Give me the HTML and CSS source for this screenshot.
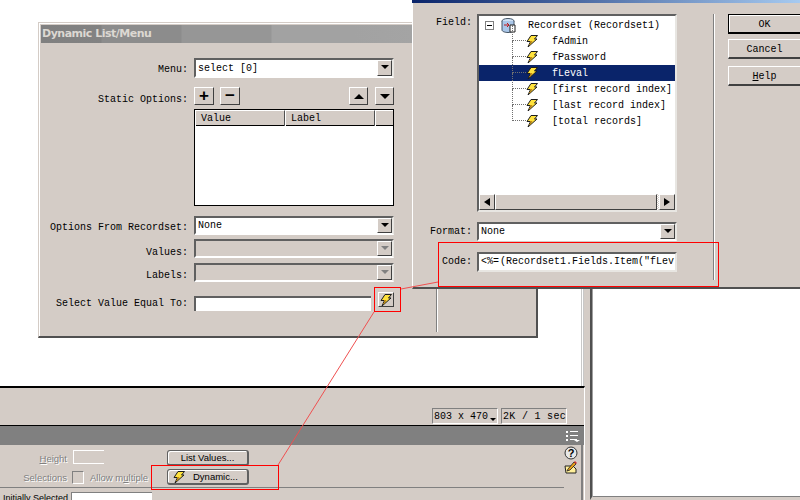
FILE: index.html
```html
<!DOCTYPE html>
<html lang="en">
<head>
<meta charset="utf-8">
<title>Dynamic List/Menu</title>
<link rel="stylesheet" href="styles.css">
</head>
<body>
<div class="desk">

  <div class="gutter"></div>
  <div class="docpane"></div>

  <section class="workspace">
    <div class="status">
      <span class="status-box size">803 x 470<i class="caret"></i></span>
      <span class="status-box speed">2K / 1 sec</span>
    </div>
    <div class="band">
      <svg class="band-icon" width="14" height="12" viewBox="0 0 14 12"><path d="M0 1h2v2H0zM0 5h2v2H0zM0 9h2v2H0zM4 1h8v1H4zM4 5h8v1H4zM4 9h7v1H4zM8 10h6l-3 2z" fill="#fff"/></svg>
    </div>
    <div class="props">
      <div class="prop-main">
        <div class="prop-row first">
          <span class="prop-label"><u>H</u>eight</span>
          <span class="prop-mid"><span class="prop-input"></span></span>
          <button class="cast">List Values...</button>
        </div>
        <div class="prop-row second">
          <span class="prop-label">Selections</span>
          <span class="prop-mid">
            <span class="prop-check"></span>
            <span class="prop-label multi">Allow m<u>u</u>ltiple</span>
          </span>
          <button class="cast dyn">
            <svg class="bolt" viewBox="0 0 12 12"><use href="#bolt"/></svg>
            <span>Dynamic...</span>
          </button>
        </div>
        <div class="prop-third">
          <span class="init-label">Initially Selected</span>
          <span class="init-input"></span>
        </div>
      </div>
      <div class="prop-side">
        <svg width="14" height="14" viewBox="0 0 14 14"><circle cx="7" cy="7" r="6" fill="#e8e8e8" stroke="#333"/><text x="7" y="10.500" class="q">?</text></svg>
        <svg width="14" height="14" viewBox="0 0 14 14"><path d="M1 6h8l3 3v4H2z" fill="#ffef9a" stroke="#222"/><path d="M4 9l6-7 2 2-6 6-3 1z" fill="#e8a018" stroke="#222" stroke-width=".8"/><path d="M10 2l1-1 2 2-1 1z" fill="#d03030"/></svg>
      </div>
    </div>
  </section>

  <section class="win win-list">
    <h1 class="title">Dynamic List/Menu</h1>
    <div class="win-sep"></div>
    <div class="form">
      <label class="lbl r-menu">Menu:</label>
      <div class="select r-menu"><span>select [0]</span><i class="drop"></i></div>

      <label class="lbl r-tools">Static Options:</label>
      <div class="tools r-tools">
        <button class="tool"><b>+</b></button>
        <button class="tool"><b>−</b></button>
        <span class="grow"></span>
        <button class="tool arrow"><i class="tri up"></i></button>
        <button class="tool arrow"><i class="tri down"></i></button>
      </div>

      <div class="table r-table">
        <div class="thead">
          <span class="th val">Value</span>
          <span class="th lab">Label</span>
          <span class="th end"></span>
        </div>
      </div>

      <label class="lbl r-opts">Options From Recordset:</label>
      <div class="select r-opts"><span>None</span><i class="drop"></i></div>

      <label class="lbl r-vals">Values:</label>
      <div class="select off r-vals"><span></span><i class="drop"></i></div>

      <label class="lbl r-labs">Labels:</label>
      <div class="select off r-labs"><span></span><i class="drop"></i></div>

      <label class="lbl r-eq">Select Value Equal To:</label>
      <div class="eq r-eq">
        <div class="text-in"></div>
        <button class="bolt-btn"><svg class="bolt" viewBox="0 0 12 12"><use href="#bolt"/></svg></button>
      </div>
    </div>
  </section>

  <section class="win win-field">
    <div class="field-top"></div>
    <div class="field-body">
      <div class="field-form">
        <label class="lbl2 field-lbl">Field:</label>
        <div class="tree">
          <div class="tree-scroll">
            <div class="node root">
              <i class="minus"></i>
              <svg class="db" width="15" height="15" viewBox="0 0 15 15"><ellipse cx="7" cy="3" rx="6" ry="2.500" fill="#cfe0f4" stroke="#456"/><path d="M1 3v9c0 1.500 3 2.500 6 2.500s6-1 6-2.500V3" fill="#a9c6e8" stroke="#456"/><path d="M3 7h5M6 5l2 2-2 2" stroke="#c01818" fill="none"/><path d="M9 7h5v7H9z" fill="#fff" stroke="#222"/></svg>
              <span class="root-text">Recordset (Recordset1)</span>
            </div>
            <div class="node leaf"><i class="dots"></i><svg class="bolt" viewBox="0 0 12 12"><use href="#bolt"/></svg><span class="leaf-text">fAdmin</span></div>
            <div class="node leaf"><i class="dots"></i><svg class="bolt" viewBox="0 0 12 12"><use href="#bolt"/></svg><span class="leaf-text">fPassword</span></div>
            <div class="node leaf sel"><i class="dots"></i><svg class="bolt" viewBox="0 0 12 12"><use href="#bolt"/></svg><span class="leaf-text">fLeval</span></div>
            <div class="node leaf"><i class="dots"></i><svg class="bolt" viewBox="0 0 12 12"><use href="#bolt"/></svg><span class="leaf-text">[first record index]</span></div>
            <div class="node leaf"><i class="dots"></i><svg class="bolt" viewBox="0 0 12 12"><use href="#bolt"/></svg><span class="leaf-text">[last record index]</span></div>
            <div class="node leaf last"><i class="dots"></i><svg class="bolt" viewBox="0 0 12 12"><use href="#bolt"/></svg><span class="leaf-text">[total records]</span></div>
          </div>
          <div class="hbar">
            <span class="sb"><i class="tri left"></i></span>
            <span class="thumb"></span>
            <span class="track"></span>
            <span class="sb"><i class="tri right"></i></span>
          </div>
        </div>
        <label class="lbl2 fmt-lbl">Format:</label>
        <div class="select fmt"><span>None</span><i class="drop"></i></div>
        <label class="lbl2 code-lbl">Code:</label>
        <div class="code">&lt;%= (Recordset1.Fields.Item("fLev:</div>
      </div>
      <div class="field-sep"></div>
      <div class="actions">
        <button class="act def">OK</button>
        <button class="act">Cancel</button>
        <button class="act help"><u>H</u>elp</button>
      </div>
    </div>
  </section>

  <svg class="marks" width="800" height="500" viewBox="0 0 800 500">
    <defs>
      <g id="bolt">
        <path d="M5 .5h6.500L8.500 4H11L2 12l2.500-5.500H1z" fill="#ffe23c" stroke="#1c1c1c" stroke-width="1"/>
        <path d="M3.500 10L6 6.500H4" fill="none" stroke="#c88a10" stroke-width="1"/>
      </g>
    </defs>
    <g class="lines">
      <path d="M374 312L278 465"/>
      <path d="M401 289L438 282"/>
    </g>
    <g class="boxes">
      <rect x="374.500" y="287.500" width="26" height="24"/>
      <rect x="438.500" y="242.500" width="280" height="44"/>
      <rect x="151.500" y="465.500" width="127" height="24"/>
    </g>
  </svg>
</div>
</body>
</html>
```
FILE: styles.css
```css
* { box-sizing: border-box; }
html, body { margin: 0; padding: 0; background: #fff; }
button { padding: 0; margin: 0; font: inherit; color: inherit; }

.desk {
  position: relative;
  width: 800px;
  height: 500px;
  overflow: hidden;
  background: #fff;
  font-family: "Liberation Mono", monospace;
  font-size: 10px;
  color: #000;
}

/* windows on the desktop */
.win { position: absolute; background: #d4ccc6; }

.win-list {
  left: 38px;
  top: 22px;
  width: 500px;
  height: 316px;
  border-top: 1px solid #d4ccc6;
  border-left: 1px solid #d4ccc6;
  border-right: 2px solid #505050;
  border-bottom: 2px solid #505050;
  box-shadow: inset 1px 1px 0 #fff;
  padding: 2px 0 0 2px;
}

.title {
  margin: 0;
  height: 18px;
  padding-left: 1px;
  font: bold 11px/18px "DejaVu Sans", sans-serif;
  letter-spacing: -.5px;
  color: #dcd8d2;
  background: linear-gradient(90deg, #808080 0, #828282 60px, #8c8c8c 61px, #8c8c8c 140px, #969696 141px, #969696 230px, #a2a2a2 231px, #a2a2a2 312px, #a8a8a8 100%);
}

.win-sep {
  position: absolute;
  left: 397px;
  top: 266px;
  width: 1px;
  height: 43px;
  background: #808080;
  box-shadow: 1px 0 0 #fff;
}

.form {
  display: grid;
  grid-template-columns: 147px 200px;
  column-gap: 6px;
  padding: 15px 0 0 0;
  align-items: center;
}

.lbl { text-align: right; white-space: pre; }
.r-menu { height: 20px; }
.lbl.r-menu { line-height: 23px; }
.r-tools { height: 19px; margin-top: 9px; }
.lbl.r-tools { line-height: 25px; }
.r-table { grid-column: 2; height: 97px; margin-top: 3px; }
.r-opts { height: 19px; margin-top: 10px; }
.r-vals { height: 19px; margin-top: 4px; }
.r-labs { height: 19px; margin-top: 5px; }
.r-eq { height: 16px; margin-top: 14px; }
.lbl.r-opts { line-height: 23px; }
.lbl.r-vals { line-height: 27px; }
.lbl.r-labs { line-height: 25px; }
.lbl.r-eq { line-height: 16px; }

.select {
  display: flex;
  align-items: center;
  justify-content: space-between;
  background: #fff;
  border-top: 2px solid #606060;
  border-left: 2px solid #606060;
  border-right: 2px solid #e8e6e2;
  border-bottom: 2px solid #fff;
  padding-left: 2px;
  line-height: 14px;
}
.select span { padding-top: 1px; }
.select.off { background: #d4ccc6; }

.drop {
  position: relative;
  flex: none;
  width: 15px;
  height: 100%;
  background: #d4ccc6;
  border-top: 1px solid #fff;
  border-left: 1px solid #fff;
  border-right: 1px solid #404040;
  border-bottom: 1px solid #404040;
}
.drop::after {
  content: "";
  position: absolute;
  left: 3px;
  top: 4px;
  border-left: 4px solid transparent;
  border-right: 4px solid transparent;
  border-top: 4px solid #000;
}
.off .drop::after { border-top-color: #808080; }

.tools { display: flex; gap: 6px; }
.grow { flex: 1; }
.tool {
  width: 20px;
  height: 18px;
  background: #d4ccc6;
  border-top: 1px solid #fff;
  border-left: 1px solid #fff;
  border-right: 1px solid #404040;
  border-bottom: 1px solid #404040;
  display: flex;
  align-items: center;
  justify-content: center;
  font: bold 17px/14px "Liberation Sans", sans-serif;
}
.tool.arrow { width: 19px; }
.tools .arrow:last-child { margin-left: 1px; }

.tri { display: block; width: 0; height: 0; }
.tri.up { border: 5px solid transparent; border-top: 0; border-bottom: 5px solid #000; }
.tri.down { border: 5px solid transparent; border-bottom: 0; border-top: 5px solid #000; }
.tri.left { border: 4px solid transparent; border-left: 0; border-right: 6px solid #000; }
.tri.right { border: 4px solid transparent; border-right: 0; border-left: 6px solid #000; }

.table { background: #fff; border: 1px solid #000; }
.thead {
  display: grid;
  grid-template-columns: 90px 90px 1fr;
  height: 16px;
  border-bottom: 1px solid #000;
  background: #d4ccc6;
}
.th {
  padding-left: 5px;
  line-height: 15px;
  border-top: 1px solid #fff;
  border-left: 1px solid #fff;
  border-right: 1px solid #505050;
}
.th.end { border-right: 0; }

.eq { display: flex; }
.text-in {
  width: 179px;
  height: 15px;
  background: #fff;
  border-top: 2px solid #606060;
  border-left: 2px solid #606060;
}
.bolt-btn {
  width: 16px;
  height: 15px;
  margin: -4px 0 0 7px;
  background: #d4ccc6;
  border-top: 1px solid #fff;
  border-left: 1px solid #fff;
  border-right: 1px solid #404040;
  border-bottom: 1px solid #404040;
  display: flex;
  align-items: center;
  justify-content: center;
}
.bolt { display: block; width: 12px; height: 12px; flex: none; }

/* field window */
.win-field {
  left: 412px;
  top: 0;
  width: 388px;
  height: 289px;
  border-left: 1px solid #fff;
  border-bottom: 2px solid #505050;
}
.field-top { height: 3px; margin-left: -1px; background: linear-gradient(90deg, #0a246a, #a6caf0); }
.field-body { display: flex; padding-top: 11px; }
.field-form {
  width: 300px;
  display: grid;
  grid-template-columns: 59px 200px;
  column-gap: 5px;
  align-content: start;
}
.lbl2 { text-align: right; line-height: 14px; }
.field-lbl { margin-top: 2px; }

.tree {
  height: 198px;
  background: #fff;
  border-top: 2px solid #606060;
  border-left: 2px solid #606060;
  border-right: 2px solid #e8e6e2;
  border-bottom: 2px solid #e8e6e2;
  display: flex;
  flex-direction: column;
}
.tree-scroll { flex: 1; padding-top: 1px; }
.node { display: flex; align-items: center; height: 16px; position: relative; white-space: pre; }
.root { padding-left: 6px; }
.minus {
  position: relative;
  width: 9px;
  height: 9px;
  border: 1px solid #808080;
  flex: none;
}
.minus::after { content: ""; position: absolute; left: 1px; top: 3px; width: 5px; height: 1px; background: #000; }
.db { margin-left: 7px; flex: none; }
.root-text { margin-left: 12px; }

.leaf { padding-left: 47px; }
.dots {
  position: absolute;
  left: 33px;
  top: -8px;
  width: 14px;
  height: 16px;
  border-left: 1px dotted #707070;
  border-bottom: 1px dotted #707070;
}
.leaf.sel { background: #0a246a; color: #fff; }
.leaf-text { margin-left: 14px; }

.hbar { display: flex; height: 16px; flex: none; }
.sb {
  flex: none;
  width: 16px;
  display: flex;
  align-items: center;
  justify-content: center;
  background: #d4ccc6;
  border-top: 1px solid #fff;
  border-left: 1px solid #fff;
  border-right: 1px solid #404040;
  border-bottom: 1px solid #404040;
}
.thumb {
  width: 162px;
  background: #d4ccc6;
  border-top: 1px solid #fff;
  border-left: 1px solid #fff;
  border-right: 1px solid #404040;
  border-bottom: 1px solid #404040;
}
.track { flex: 1; background: repeating-conic-gradient(#fff 0 25%, #d4ccc6 0 50%) 0 0 / 2px 2px; }

.fmt-lbl { margin-top: 13px; }
.fmt { margin-top: 10px; height: 19px; }
.code-lbl { margin-top: 14px; }
.code {
  margin-top: 11px;
  height: 20px;
  overflow: hidden;
  white-space: pre;
  word-spacing: -5px;
  background: #fff;
  border-top: 2px solid #606060;
  border-left: 2px solid #606060;
  border-right: 2px solid #e8e6e2;
  border-bottom: 2px solid #e8e6e2;
  padding-left: 2px;
  line-height: 15px;
}

.field-sep {
  width: 1px;
  height: 266px;
  background: #808080;
  box-shadow: 1px 0 0 #fff;
}
.actions { margin-left: 14px; flex: 1; display: flex; flex-direction: column; }
.act {
  height: 20px;
  margin-top: 5px;
  padding-top: 2px;
  background: #d4ccc6;
  border: 0;
  border-top: 1px solid #fff;
  border-left: 1px solid #fff;
  border-bottom: 2px solid #404040;
  text-align: center;
}
.act.def { margin-top: 0; border: 1px solid #000; border-right: 0; border-bottom: 2px solid #000; box-shadow: inset 1px 1px 0 #fff; }
.act.help { margin-top: 7px; }

/* workspace behind the windows */
.workspace {
  position: absolute;
  left: 0;
  top: 386px;
  width: 585px;
  height: 114px;
  background: #d4ccc6;
  border-top: 2px solid #000;
  border-right: 1px solid #fff;
  display: flex;
  flex-direction: column;
}
.status { height: 37px; display: flex; justify-content: flex-end; gap: 3px; padding: 20px 17px 0 0; }
.status-box {
  position: relative;
  width: 66px;
  height: 16px;
  line-height: 15px;
  padding-left: 1px;
  border-top: 1px solid #808080;
  border-left: 1px solid #808080;
  border-right: 1px solid #fff;
  border-bottom: 1px solid #fff;
  white-space: pre;
}
.status-box.speed { letter-spacing: .3px; }
.caret {
  position: absolute;
  right: 1px;
  bottom: 2px;
  border-left: 3px solid transparent;
  border-right: 3px solid transparent;
  border-top: 3px solid #000;
}
.band {
  height: 20px;
  background: #808080;
  border-top: 1px solid #000;
  display: flex;
  justify-content: flex-end;
  align-items: center;
  padding-right: 4px;
}
.props { flex: 1; display: flex; border-right: 2px solid #808080; margin-right: 1px; }
.prop-main { flex: 1; font-family: "Liberation Sans", sans-serif; font-size: 9.500px; color: #808080; }
.prop-row { display: grid; grid-template-columns: 67px 100px 82px; align-items: center; }
.prop-row.first { padding-top: 5px; }
.prop-row.second { margin-top: 3px; }
.prop-label { text-align: right; text-shadow: 1px 1px 0 #fff; white-space: pre; }
.prop-mid { display: flex; align-items: center; }
.prop-input {
  width: 31px;
  height: 14px;
  margin: -3px 0 0 6px;
  border-top: 1px solid #fff;
  border-left: 1px solid #fff;
  border-bottom: 1px solid #fff;
}
.cast {
  height: 16px;
  border: 1px solid #606060;
  border-radius: 3px;
  border-bottom-width: 2px;
  border-right-width: 2px;
  background: #d4ccc6;
  box-shadow: inset 1px 1px 0 #fff;
  font: 9.500px/12px "Liberation Sans", sans-serif;
  color: #000;
  display: flex;
  align-items: center;
  justify-content: center;
}
.prop-check {
  width: 12px;
  height: 13px;
  margin-left: 5px;
  border-top: 1px solid #808080;
  border-left: 1px solid #808080;
  border-right: 1px solid #fff;
  border-bottom: 1px solid #fff;
}
.multi { margin-left: 6px; }
.dyn { justify-content: flex-start; padding-left: 5px; gap: 8px; }
.prop-third {
  display: flex;
  align-items: flex-start;
  margin-top: 2px;
  height: 13px;
  border-top: 1px solid #808080;
}
.init-label { width: 71px; padding-left: 3px; flex: none; color: #000; font-size: 9px; line-height: 20px; white-space: pre; }
.init-input {
  width: 81px;
  height: 14px;
  margin-top: 4px;
  background: #fff;
  border-top: 1px solid #808080;
  border-left: 1px solid #808080;
}
.prop-side { width: 16px; display: flex; flex-direction: column; margin-right: 1px; padding-top: 1px; }
.q { font: bold 11px "Liberation Sans", sans-serif; text-anchor: middle; fill: #000; }

.gutter {
  position: absolute;
  left: 581px;
  top: 289px;
  width: 9px;
  height: 211px;
  background: linear-gradient(90deg, #c8c8c8 0 1px, #fff 1px 2px, #c8c8c8 2px 3px, #d4ccc6 3px);
}
.docpane {
  position: absolute;
  left: 590px;
  top: 289px;
  width: 210px;
  height: 211px;
  background: #fff;
  border-left: 2px solid #505050;
  border-bottom: 3px solid #d4ccc6;
  box-shadow: inset 1px 0 0 #a0a0a0, inset 0 -1px 0 #808080;
}

.marks { position: absolute; left: 0; top: 0; pointer-events: none; }
.lines path { fill: none; stroke: #f05050; stroke-width: 1; }
.boxes rect { fill: none; stroke: #f00; stroke-width: 1; }
```
